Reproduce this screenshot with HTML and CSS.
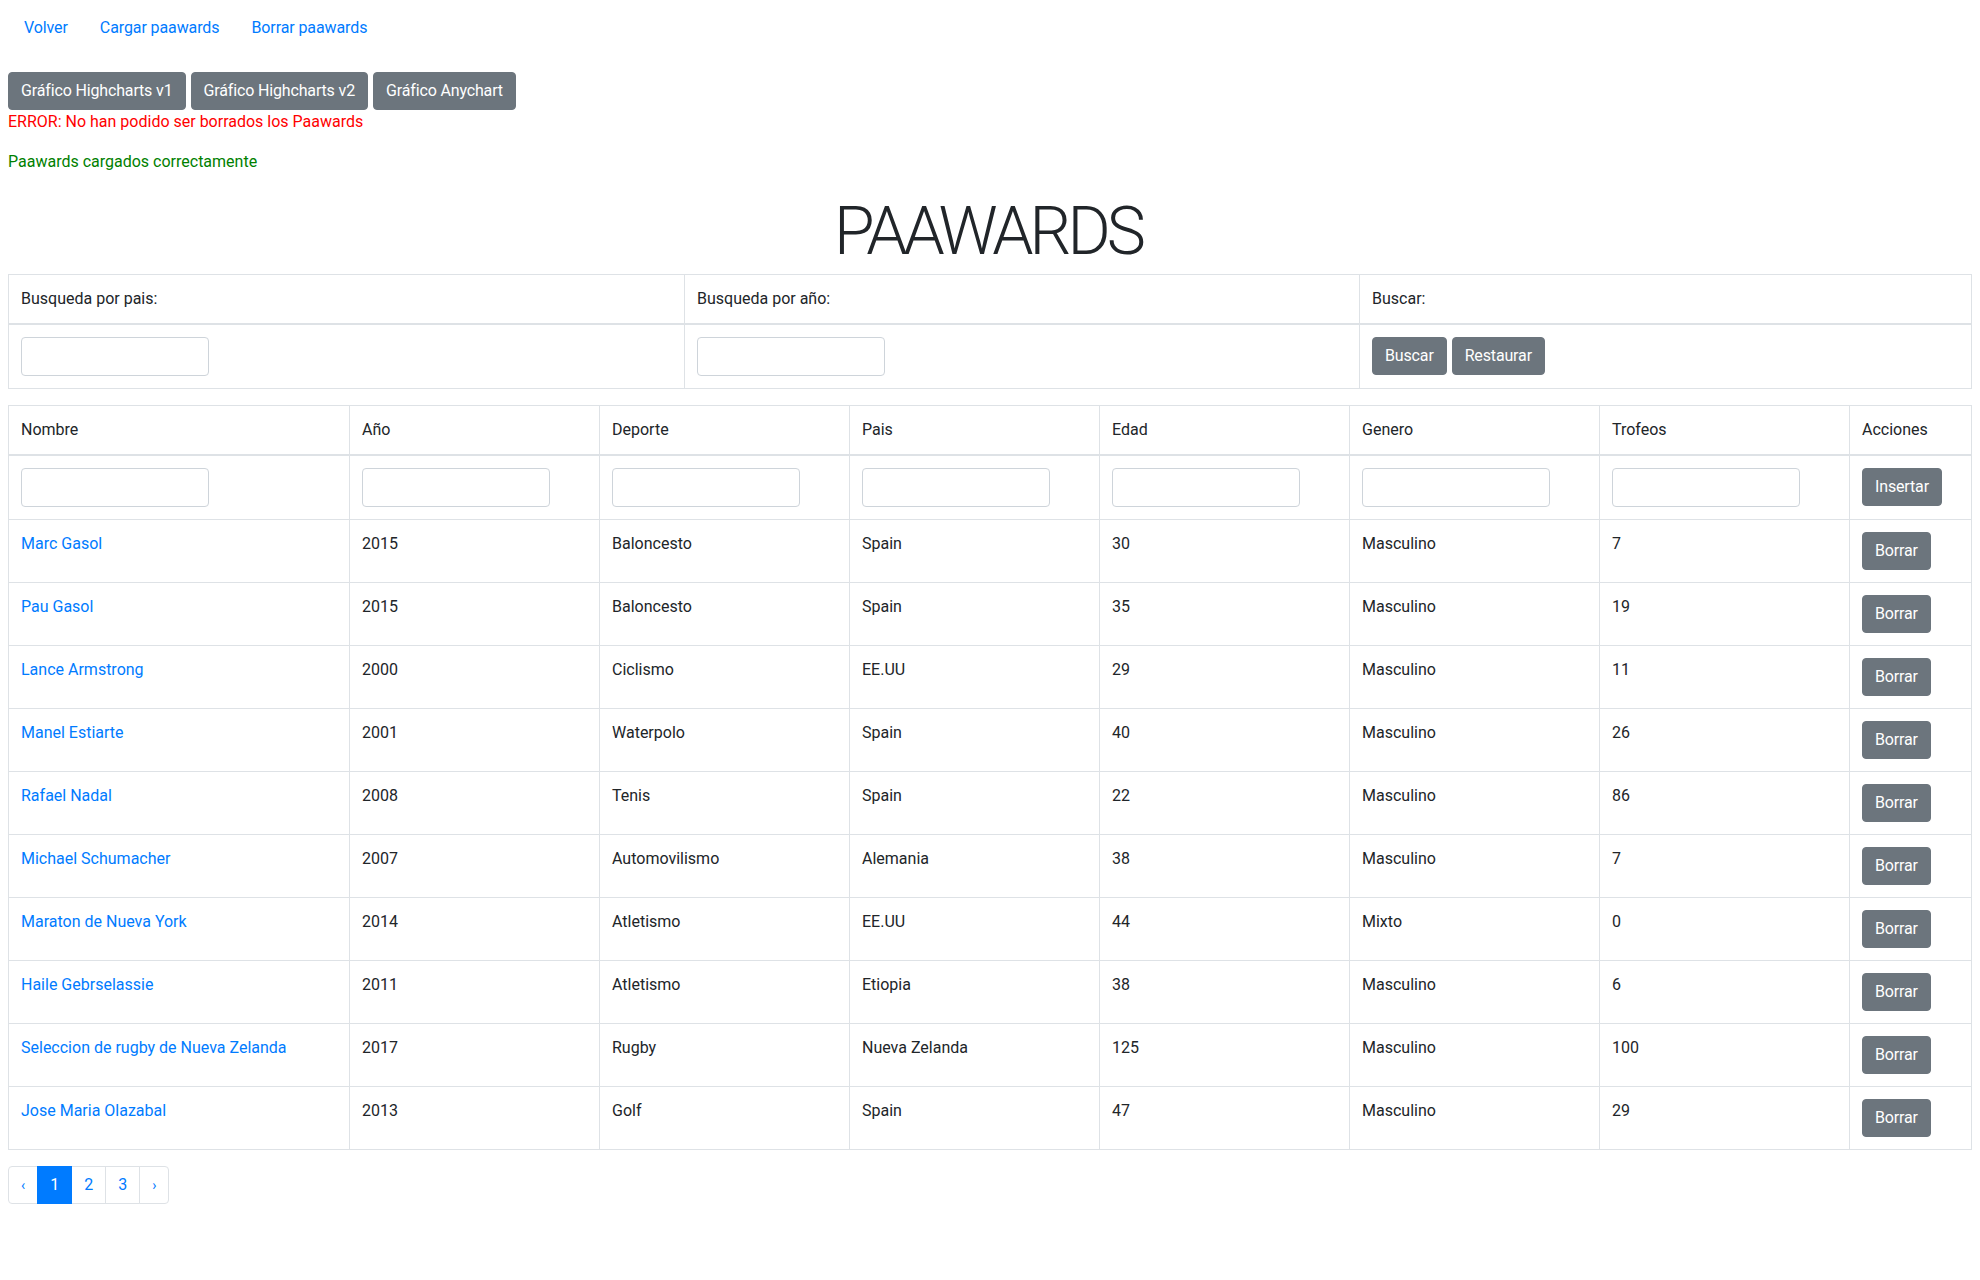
FILE: index.html
```html
<!DOCTYPE html>
<html lang="es">
<head>
<meta charset="utf-8">
<title>Paawards</title>
<link rel="stylesheet" href="styles.css">
</head>
<body>
<ul class="nav">
  <li><a class="nav-link" href="#">Volver</a></li>
  <li><a class="nav-link" href="#">Cargar paawards</a></li>
  <li><a class="nav-link" href="#">Borrar paawards</a></li>
</ul>
<div class="chart-buttons">
  <button class="btn">Gráfico Highcharts v1</button>
  <button class="btn">Gráfico Highcharts v2</button>
  <button class="btn">Gráfico Anychart</button>
</div>
<p class="msg msg-error">ERROR: No han podido ser borrados los Paawards</p>
<p class="msg msg-ok">Paawards cargados correctamente</p>
<h1 class="title">PAAWARDS</h1>

<table class="table search-table">
  <thead>
    <tr>
      <th class="s-col1">Busqueda por pais:</th>
      <th class="s-col2">Busqueda por año:</th>
      <th>Buscar:</th>
    </tr>
  </thead>
  <tbody>
    <tr>
      <td><input class="field" type="text"></td>
      <td><input class="field" type="text"></td>
      <td><div class="btn-pair"><button class="btn">Buscar</button><button class="btn">Restaurar</button></div></td>
    </tr>
  </tbody>
</table>

<table class="table data-table">
  <thead>
    <tr>
      <th class="c-name">Nombre</th>
      <th class="c-mid">Año</th>
      <th class="c-mid">Deporte</th>
      <th class="c-mid">Pais</th>
      <th class="c-mid">Edad</th>
      <th class="c-mid">Genero</th>
      <th class="c-mid">Trofeos</th>
      <th>Acciones</th>
    </tr>
  </thead>
  <tbody>
    <tr>
      <td><input class="field" type="text"></td>
      <td><input class="field" type="text"></td>
      <td><input class="field" type="text"></td>
      <td><input class="field" type="text"></td>
      <td><input class="field" type="text"></td>
      <td><input class="field" type="text"></td>
      <td><input class="field" type="text"></td>
      <td><button class="btn">Insertar</button></td>
    </tr>
    <tr><td><a href="#">Marc Gasol</a></td><td>2015</td><td>Baloncesto</td><td>Spain</td><td>30</td><td>Masculino</td><td>7</td><td><button class="btn">Borrar</button></td></tr>
    <tr><td><a href="#">Pau Gasol</a></td><td>2015</td><td>Baloncesto</td><td>Spain</td><td>35</td><td>Masculino</td><td>19</td><td><button class="btn">Borrar</button></td></tr>
    <tr><td><a href="#">Lance Armstrong</a></td><td>2000</td><td>Ciclismo</td><td>EE.UU</td><td>29</td><td>Masculino</td><td>11</td><td><button class="btn">Borrar</button></td></tr>
    <tr><td><a href="#">Manel Estiarte</a></td><td>2001</td><td>Waterpolo</td><td>Spain</td><td>40</td><td>Masculino</td><td>26</td><td><button class="btn">Borrar</button></td></tr>
    <tr><td><a href="#">Rafael Nadal</a></td><td>2008</td><td>Tenis</td><td>Spain</td><td>22</td><td>Masculino</td><td>86</td><td><button class="btn">Borrar</button></td></tr>
    <tr><td><a href="#">Michael Schumacher</a></td><td>2007</td><td>Automovilismo</td><td>Alemania</td><td>38</td><td>Masculino</td><td>7</td><td><button class="btn">Borrar</button></td></tr>
    <tr><td><a href="#">Maraton de Nueva York</a></td><td>2014</td><td>Atletismo</td><td>EE.UU</td><td>44</td><td>Mixto</td><td>0</td><td><button class="btn">Borrar</button></td></tr>
    <tr><td><a href="#">Haile Gebrselassie</a></td><td>2011</td><td>Atletismo</td><td>Etiopia</td><td>38</td><td>Masculino</td><td>6</td><td><button class="btn">Borrar</button></td></tr>
    <tr><td><a href="#">Seleccion de rugby de Nueva Zelanda</a></td><td>2017</td><td>Rugby</td><td>Nueva Zelanda</td><td>125</td><td>Masculino</td><td>100</td><td><button class="btn">Borrar</button></td></tr>
    <tr><td><a href="#">Jose Maria Olazabal</a></td><td>2013</td><td>Golf</td><td>Spain</td><td>47</td><td>Masculino</td><td>29</td><td><button class="btn">Borrar</button></td></tr>
  </tbody>
</table>

<ul class="pagination">
  <li><a class="page-link page-arrow" href="#">&lsaquo;</a></li>
  <li><a class="page-link active" href="#">1</a></li>
  <li><a class="page-link" href="#">2</a></li>
  <li><a class="page-link" href="#">3</a></li>
  <li><a class="page-link page-arrow" href="#">&rsaquo;</a></li>
</ul>
</body>
</html>
```
FILE: styles.css
```css
* { box-sizing: border-box; }

body {
  margin: 8px;
  font-family: Roboto, "Liberation Sans", Arial, sans-serif;
  font-size: 16px;
  line-height: 1.5;
  color: #212529;
  background: #fff;
}

a { color: #007bff; text-decoration: none; }

.nav {
  display: flex;
  list-style: none;
  margin: 0;
  padding: 0;
}
.nav-link {
  display: block;
  padding: 8px 16px;
  letter-spacing: -0.1px;
}

.chart-buttons {
  display: flex;
  gap: 5px;
  margin-top: 24px;
}

.btn-pair {
  display: flex;
  gap: 5px;
}

.btn {
  display: inline-block;
  font-family: inherit;
  font-size: 16px;
  line-height: 24px;
  letter-spacing: -0.15px;
  padding: 6px 12px;
  color: #fff;
  background: #6c757d;
  border: 1px solid #6c757d;
  border-radius: 4px;
  cursor: pointer;
  vertical-align: top;
}

.msg { margin: 0 0 16px; }
.msg-error { color: #ff0000; }
.msg-ok { color: #008000; }

.title {
  margin: 0;
  text-align: center;
  font-size: 66px;
  font-weight: 300;
  line-height: 84px;
  letter-spacing: -4px;
  text-indent: -4px;
  color: #212529;
}

.table {
  width: 100%;
  border-collapse: collapse;
  table-layout: fixed;
  margin-bottom: 16px;
  border: 1px solid #dee2e6;
}
.table th,
.table td {
  padding: 12px;
  border: 1px solid #dee2e6;
  vertical-align: top;
  text-align: left;
  font-weight: 400;
}
.table thead th {
  border-bottom: 2px solid #dee2e6;
}

.s-col1 { width: 676px; }
.s-col2 { width: 675px; }

.c-name { width: 341px; }
.c-mid { width: 250px; }

.field {
  display: block;
  width: 188px;
  height: 39px;
  margin: 0;
  padding: 6px 12px;
  font-family: inherit;
  font-size: 16px;
  border: 1px solid #ced4da;
  border-radius: 4px;
  background: #fff;
}

.pagination {
  display: flex;
  list-style: none;
  margin: 0;
  padding: 0;
}
.page-link {
  display: block;
  padding: 8px 12px;
  line-height: 20px;
  margin-left: -1px;
  border: 1px solid #dee2e6;
  color: #007bff;
  background: #fff;
}
.pagination li:first-child .page-link {
  margin-left: 0;
  border-radius: 4px 0 0 4px;
}
.pagination li:last-child .page-link {
  border-radius: 0 4px 4px 0;
}
.page-link.active {
  position: relative;
  z-index: 1;
  color: #fff;
  background: #007bff;
  border-color: #007bff;
}
.page-arrow {
  font-size: 14px;
}
```
